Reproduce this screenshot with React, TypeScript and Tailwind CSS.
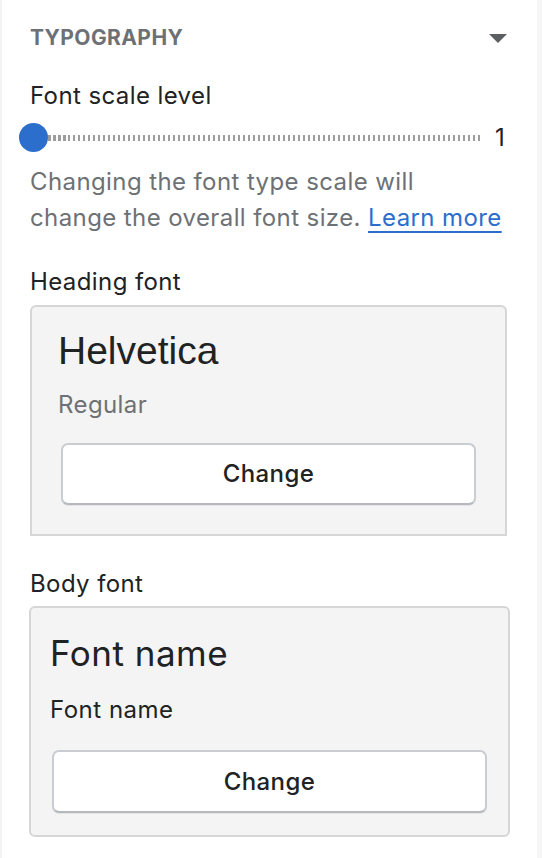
import React from "react";

const ui = { fontFamily: "Inter, 'Noto Sans', sans-serif" };

function ChangeButton({ className }: { className: string }) {
  return (
    <button
      className={`flex items-center justify-center bg-white border-2 border-[#c9ccd0] border-b-[#b5b9bd] rounded-[7px] shadow-[0_1px_0_rgba(0,0,0,0.06)] text-[24px] leading-[28px] tracking-[0.4px] font-medium text-[#202223] ${className}`}
      style={ui}
    >
      Change
    </button>
  );
}

export default function App() {
  return (
    <div className="w-[542px] h-[858px] bg-white flex overflow-hidden" style={ui}>
      <div className="w-[537px] h-full border-l-2 border-[#f3f3f3] pl-[28px] flex flex-col">
        {/* Header */}
        <div className="mt-[26px] w-[477px] h-[24px] flex items-center justify-between">
          <span className="text-[21px] leading-[24px] font-bold tracking-[0.4px] text-[#6d7175]">TYPOGRAPHY</span>
          <svg width="18" height="9" viewBox="0 0 18 9">
            <path d="M0 0 L18 0 L9 9 Z" fill="#5c5f62" />
          </svg>
        </div>

        {/* Font scale level */}
        <div className="mt-[32px] text-[24px] leading-[28px] tracking-[0.4px] text-[#202223]">Font scale level</div>

        {/* Slider */}
        <div className="mt-[12px] h-[31px] flex items-center ml-[-11px]">
          <div className="relative w-[464px] h-[31px] flex items-center">
            <div className="ml-[29px] flex-1 h-[6px] bg-[repeating-linear-gradient(90deg,#9c9c9c_0px,#9c9c9c_2.5px,transparent_2.5px,transparent_5px)]" />
            <div className="absolute left-0 top-[1px] w-[29px] h-[29px] rounded-full bg-[#2c6ecb]" />
          </div>
          <span className="ml-[12px] text-[24px] leading-[28px] text-[#202223]">1</span>
        </div>

        {/* Help text */}
        <div className="mt-[11px] text-[24px] leading-[36px] tracking-[0.4px] text-[#6d7175]">
          <div className="whitespace-nowrap">Changing the font type scale will</div>
          <div className="whitespace-nowrap">
            change the overall font size.{" "}
            <a className="text-[#2c6ecb] underline decoration-[length:1.5px] underline-offset-[5px]">Learn more</a>
          </div>
        </div>

        {/* Heading font */}
        <div className="mt-[32px] text-[24px] leading-[28px] tracking-[0.4px] text-[#202223]">Heading font</div>
        <div className="mt-[9px] w-[477px] bg-[#f4f4f4] border-2 border-[#d6d6d6] rounded-t-[6px] pt-[20px] pb-[29px] px-[26px] flex flex-col">
          <div className="text-[39px] leading-[48px] text-[#202223]" style={{ fontFamily: "'Liberation Sans', Arial, sans-serif" }}>
            Helvetica
          </div>
          <div className="mt-[16px] text-[24px] leading-[28px] tracking-[0.4px] text-[#6d7175]">Regular</div>
          <ChangeButton className="mt-[24px] mx-[3px] h-[62px]" />
        </div>

        {/* Body font */}
        <div className="mt-[34px] text-[24px] leading-[28px] tracking-[0.4px] text-[#202223]">Body font</div>
        <div className="mt-[8px] ml-[-1px] w-[481px] bg-[#f4f4f4] border-2 border-[#d6d6d6] rounded-[6px] pt-[24px] pb-[22px] pl-[19px] pr-[21px] flex flex-col">
          <div className="text-[35px] leading-[42px] tracking-[0.5px] text-[#202223]">Font name</div>
          <div className="mt-[22px] text-[24px] leading-[28px] tracking-[0.5px] text-[#202223]">Font name</div>
          <ChangeButton className="mt-[26px] ml-[2px] h-[63px]" />
        </div>
      </div>
      <div className="w-[5px] h-full bg-[#f6f6f6]" />
    </div>
  );
}
